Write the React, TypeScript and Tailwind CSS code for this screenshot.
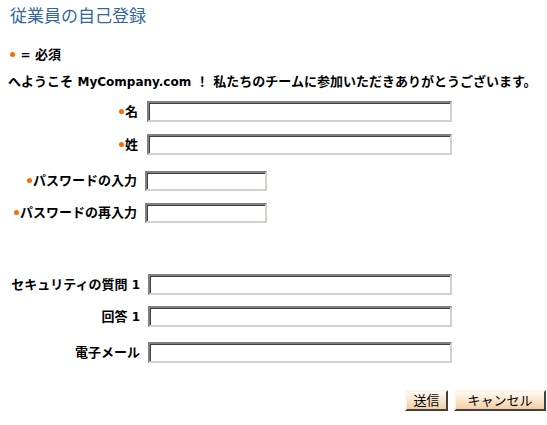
import React from "react";

const font = { fontFamily: '"DejaVu Sans", Verdana, "Noto Sans CJK JP", sans-serif' };

function Dot() {
  return <span className="inline-block w-[5px] h-[5px] rounded-full bg-[#ff6a00] mr-[1px] align-middle relative top-[-1px]" />;
}

function Field({ w, h = 21 }: { w: number; h?: number }) {
  return (
    <input
      type="text"
      className="bg-white outline-none border-2 border-t-[#808080] border-l-[#808080] border-b-[#d4d0c8] border-r-[#d4d0c8] shadow-[inset_1px_1px_0_#404040]"
      style={{ width: w, height: h }}
    />
  );
}

function Row({
  label,
  req,
  labelW,
  gap,
  inputW,
  h,
  mt,
}: {
  label: React.ReactNode;
  req?: boolean;
  labelW: number;
  gap: number;
  inputW: number;
  h?: number;
  mt: number;
}) {
  return (
    <div className="flex items-center" style={{ marginTop: mt }}>
      <div className="text-right whitespace-nowrap font-bold text-[13px] leading-[16px] text-black" style={{ width: labelW, marginRight: gap }}>
        {req && <Dot />}
        {label}
      </div>
      <Field w={inputW} h={h} />
    </div>
  );
}

const One = () => <span className="text-[12px]"> 1</span>;

export default function App() {
  return (
    <div className="w-[547px] h-[425px] bg-white text-black overflow-hidden" style={font}>
      <div className="pl-[10px] pt-[5px] text-[17px] leading-[22px] text-[#336699]">従業員の自己登録</div>
      <div className="pl-[10px] mt-[20px] text-[13px] leading-[16px] font-bold">
        <Dot /> <span className="text-[12px]">=</span> 必須
      </div>
      <div className="pl-[8px] mt-[11px] text-[13px] leading-[16px] font-bold whitespace-nowrap">
        へようこそ <span className="text-[12px]">MyCompany.com</span> ！ 私たちのチームに参加いただきありがとうございます。
      </div>
      <div className="pl-[8px]">
        <Row label="名" req labelW={130} gap={9} inputW={305} mt={11} />
        <Row label="姓" req labelW={130} gap={9} inputW={305} mt={12} />
        <Row label="パスワードの入力" req labelW={129} gap={8} inputW={122} h={20} mt={16} />
        <Row label="パスワードの再入力" req labelW={129} gap={8} inputW={122} h={20} mt={12} />
        <Row label={<>セキュリティの質問<One /></>} labelW={132} gap={8} inputW={304} mt={51} />
        <Row label={<>回答<One /></>} labelW={132} gap={8} inputW={304} mt={11} />
        <Row label="電子メール" labelW={132} gap={8} inputW={304} mt={15} />
      </div>
      <div className="flex justify-end pr-[1px] mt-[27px] gap-[6px]">
        <button className="h-[21px] w-[43px] text-[13px] leading-[17px] bg-gradient-to-b from-[#fffaf2] to-[#f3cfa4] border-2 border-t-[#fff4e6] border-l-[#fff4e6] border-b-[#404040] border-r-[#404040]">
          送信
        </button>
        <button className="h-[21px] w-[92px] text-[13px] leading-[17px] bg-gradient-to-b from-[#fffaf2] to-[#f3cfa4] border-2 border-t-[#fff4e6] border-l-[#fff4e6] border-b-[#404040] border-r-[#404040]">
          キャンセル
        </button>
      </div>
    </div>
  );
}
